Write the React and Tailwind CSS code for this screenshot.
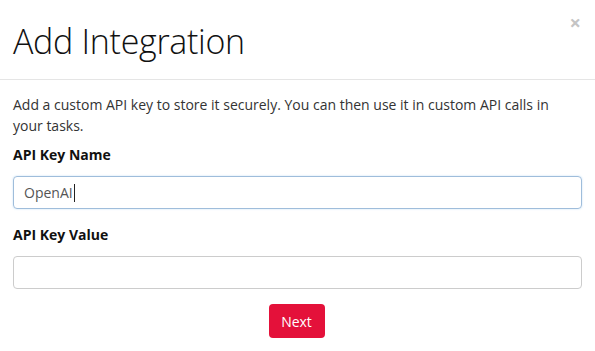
export default function App() {
  return (
    <div className="w-[595px] h-[351px] bg-white text-[#333] font-['Open_Sans',sans-serif] overflow-hidden">
      {/* Header */}
      <div className="relative h-[80px] border-b border-[#e5e5e5] px-[13px] pt-[14px]">
        <h1 className="text-[34px] leading-[54px] font-light text-[#111] tracking-[-0.3px]">Add Integration</h1>
        <button className="absolute right-[14px] top-[13px] text-[#c4c4c4] text-[20px] font-bold leading-none">×</button>
      </div>

      {/* Body */}
      <div className="px-[13px] pt-[14px]">
        <p className="text-[14px] leading-[21px] text-[#333]">
          Add a custom API key to store it securely. You can then use it in custom API calls in your tasks.
        </p>

        <label className="block mt-[9px] text-[14px] leading-[20px] font-bold text-[#111]">API Key Name</label>
        <div className="mt-[11px] h-[33px] rounded-[4px] border border-[#9fbddb] shadow-[0_0_2px_rgba(102,175,233,0.4)] flex items-center px-[10px]">
          <span className="text-[14px] text-[#555]">OpenAI</span>
          <span className="w-px h-[18px] bg-[#222] ml-[1px]"></span>
        </div>

        <label className="block mt-[16px] text-[14px] leading-[20px] font-bold text-[#111]">API Key Value</label>
        <div className="mt-[11px] h-[33px] rounded-[4px] border border-[#ccc]"></div>

        <div className="flex justify-center mt-[15px]">
          <button className="w-[56px] h-[34px] rounded-[4px] bg-[#e4113a] text-white text-[14px] -translate-x-px">Next</button>
        </div>
      </div>
    </div>
  );
}
